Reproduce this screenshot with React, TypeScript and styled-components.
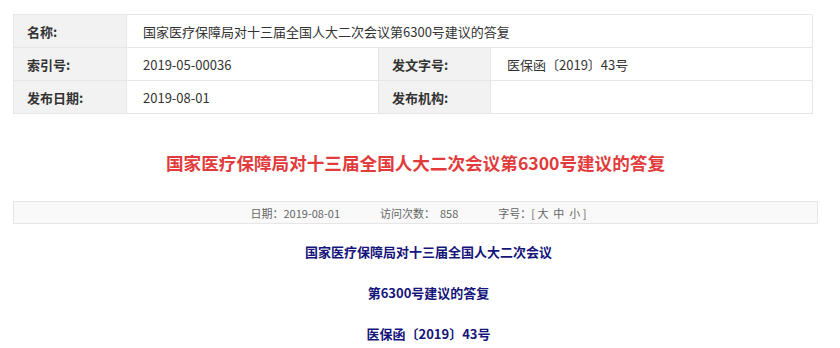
import React from 'react';
import styled, { createGlobalStyle } from 'styled-components';

const GlobalStyle = createGlobalStyle`
  body {
    margin: 0;
    background: #fff;
    font-family: "Noto Sans CJK SC", "Noto Sans", sans-serif;
  }
`;

const Page = styled.div`
  padding: 14px 0 0 13px;
  width: 805px;
`;

const InfoTable = styled.div`
  width: 799px;
  display: grid;
  grid-template-columns: 113px 252px 112px 322px;
  border-top: 1px solid #e6e6e6;
  border-left: 1px solid #e6e6e6;
  box-sizing: border-box;
`;

const Cell = styled.div<{ $label?: boolean; $span?: number }>`
  height: 33px;
  box-sizing: border-box;
  display: flex;
  align-items: center;
  padding-left: ${(p) => (p.$label ? '13px' : '16px')};
  border-right: 1px solid #e6e6e6;
  border-bottom: 1px solid #e6e6e6;
  background: ${(p) => (p.$label ? '#f2f2f2' : '#fff')};
  font-size: 13px;
  font-weight: ${(p) => (p.$label ? 700 : 400)};
  color: #333;
  grid-column: ${(p) => (p.$span ? `span ${p.$span}` : 'auto')};
`;

const Title = styled.h1`
  margin: 0;
  padding: 36px 0 0;
  height: 51px;
  text-align: center;
  font-size: 17.6px;
  font-weight: 700;
  color: #e23b3b;
  line-height: 26px;
`;

const MetaBar = styled.div`
  height: 23px;
  box-sizing: border-box;
  border: 1px solid #e6e6e6;
  background: #f9f9f9;
  display: flex;
  justify-content: center;
  align-items: center;
  gap: 40px;
  padding-left: 6px;
  font-size: 11px;
  color: #666;
`;

const MetaItem = styled.span`
  white-space: pre;
`;

const Body = styled.div`
  padding: 19px 0 0 26px;
  text-align: center;
`;

const Line = styled.p`
  margin: 0 0 23px;
  line-height: 18px;
  font-size: 13px;
  font-weight: 700;
  color: #14147a;

  &:last-child {
    margin-bottom: 0;
  }
`;

export default function App() {
  return (
    <>
      <GlobalStyle />
      <Page>
        <InfoTable>
          <Cell $label>名称:</Cell>
          <Cell $span={3}>国家医疗保障局对十三届全国人大二次会议第6300号建议的答复</Cell>
          <Cell $label>索引号:</Cell>
          <Cell>2019-05-00036</Cell>
          <Cell $label>发文字号:</Cell>
          <Cell>医保函〔2019〕43号</Cell>
          <Cell $label>发布日期:</Cell>
          <Cell>2019-08-01</Cell>
          <Cell $label>发布机构:</Cell>
          <Cell />
        </InfoTable>
        <Title>国家医疗保障局对十三届全国人大二次会议第6300号建议的答复</Title>
        <MetaBar>
          <MetaItem>日期：2019-08-01</MetaItem>
          <MetaItem>访问次数：  858</MetaItem>
          <MetaItem>字号：[ 大  中  小 ]</MetaItem>
        </MetaBar>
        <Body>
          <Line>国家医疗保障局对十三届全国人大二次会议</Line>
          <Line>第6300号建议的答复</Line>
          <Line>医保函〔2019〕43号</Line>
        </Body>
      </Page>
    </>
  );
}
